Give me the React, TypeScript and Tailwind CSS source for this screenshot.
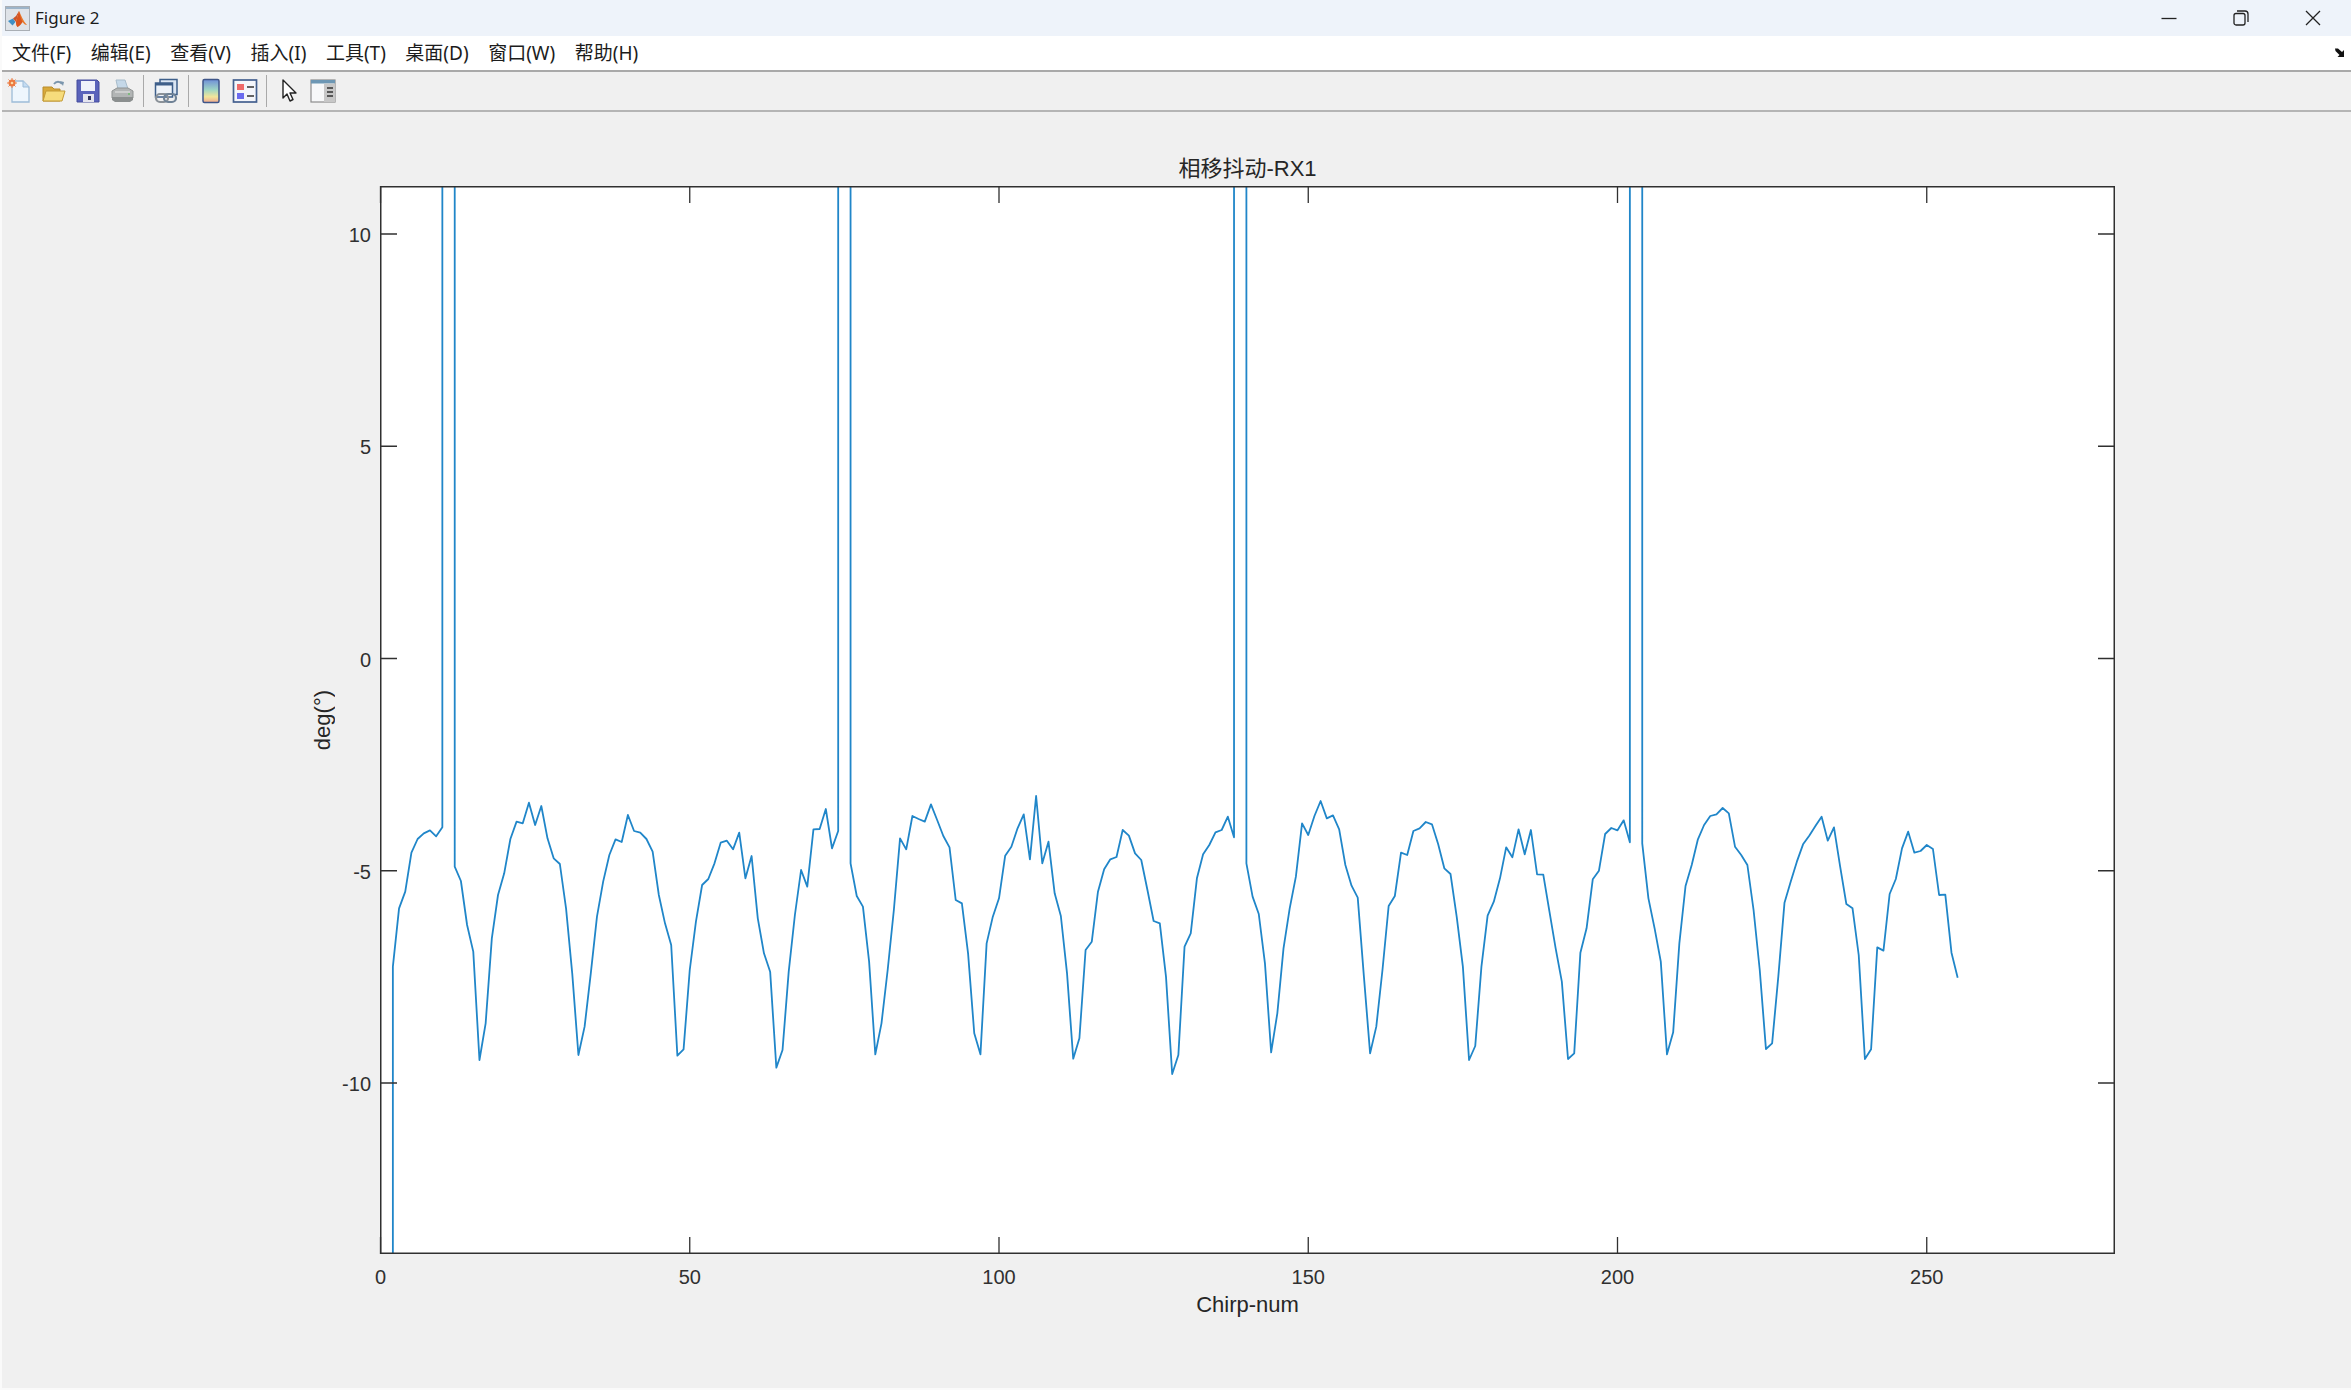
import type { ReactNode } from "react";

// heights read off the trace, one per chirp starting at chirp 2, null = clipped spike
const trace: (number | null)[] = [
  590, 415, 365, 248, 207, 190, 181, 199, 172, null, 290, 333, 465, 545, 870, 760, 505, 375, 310, 207,
  155, 160, 98, 165, 108, 205, 265, 282, 415, 610, 855, 770, 610, 440, 335, 255, 208, 216, 135, 183,
  188, 207, 245, 375, 460, 525, 857, 838, 600, 455, 345, 327, 280, 218, 212, 238, 188, 325, 258, 445,
  550, 605, 893, 840, 605, 435, 300, 350, 178, 177, 117, 235, 183, null, 280, 378, 410, 575, 853, 760,
  600, 420, 205, 238, 138, 147, 155, 103, 150, 198, 232, 390, 400, 550, 790, 853, 520, 440, 385, 257,
  230, 175, 133, 268, 78, 280, 215, 370, 438, 610, 866, 805, 540, 515, 365, 298, 268, 261, 180, 197,
  250, 270, 360, 453, 460, 620, 912, 855, 530, 490, 325, 253, 225, 187, 180, 140, 202, null, 280, 380,
  432, 580, 847, 730, 535, 415, 320, 160, 195, 138, 93, 145, 136, 178, 285, 347, 383, 620, 850, 770,
  600, 408, 378, 248, 255, 183, 175, 156, 163, 222, 295, 312, 440, 590, 870, 828, 590, 437, 395, 325,
  232, 262, 178, 253, 180, 313, 314, 425, 535, 635, 867, 850, 548, 475, 328, 302, 192, 174, 181, 151,
  217, null, 220, 385, 475, 575, 853, 787, 520, 348, 285, 208, 165, 138, 133, 114, 130, 230, 255, 285,
  420, 600, 837, 820, 620, 398, 335, 275, 223, 197, 168, 140, 212, 172, 290, 402, 415, 555, 867, 838,
  532, 542, 372, 327, 235, 185, 248, 243, 225, 237, 375, 374, 548, 623,
];

const PLOT_W = 1735;
const PLOT_H = 1068;
const xPx = (v: number) => 0.5 + v * 6.185;
const yPx = (deg: number) => 472.5 - deg * 42.45;

function tracePoints() {
  const pts: string[] = [`${xPx(2)},${PLOT_H + 20}`];
  trace.forEach((h, i) => {
    const n = i + 2;
    if (h === null) {
      pts.push(`${xPx(n - 1)},-20`, `${xPx(n + 1)},-20`);
    } else {
      pts.push(`${xPx(n)},${h / 3 + 584}`);
    }
  });
  return pts.join(" ");
}

const menus = ["文件(F)", "编辑(E)", "查看(V)", "插入(I)", "工具(T)", "桌面(D)", "窗口(W)", "帮助(H)"];
const xTicks = [0, 50, 100, 150, 200, 250];
const yTicks = [10, 5, 0, -5, -10];

function ToolIcon({ children }: { children: ReactNode }) {
  return (
    <div className="flex w-[34px] items-center justify-center">
      <svg viewBox="0 0 26 26" className="h-[26px] w-[26px]">
        {children}
      </svg>
    </div>
  );
}

function Separator({ className }: { className: string }) {
  return <div className={`h-[32px] w-px bg-[#a9a9a9] ${className}`} />;
}

function MatlabLogo() {
  return (
    <svg viewBox="0 0 25 25" className="h-[25px] w-[25px]">
      <rect x="0.5" y="0.5" width="24" height="24" fill="#dfe3e8" stroke="#a9aeb4" />
      <rect x="1" y="1" width="23" height="2" fill="#9db4c9" />
      <path d="M3 15l5-2.5 2.5 3.5-3 3.5z" fill="#3f8fc4" />
      <path d="M8 12.5l3-2.5 3-5-3 11z" fill="#c9542a" />
      <path d="M14 5c2 4 4 10 8 14-2 0-3-1-4.500-3-1.500 2-3 4-5 5-1-1-1.500-3-1.500-5z" fill="#e8792b" />
      <path d="M14 5c1 4 2 8 3.500 11-1.500 2-3 4-5 5-1-1-1.500-3-1.500-5z" fill="#d9541e" />
    </svg>
  );
}

export default function App() {
  return (
    <div className="flex h-[1390px] w-[2351px] flex-col overflow-hidden border-b-2 border-l-2 border-[#fafafa] bg-[#f0f0f0] font-['Noto_Sans','Noto_Sans_CJK_SC',sans-serif] text-[#1c1c1c]">
      {/* Title bar */}
      <div className="flex h-[36px] items-center bg-[#eef3fa] pl-[3px] pr-[2px] text-[17px]">
        <MatlabLogo />
        <span className="ml-[5px]">Figure 2</span>
        <div className="ml-auto flex">
          <div className="flex h-[36px] w-[72px] items-center justify-center">
            <svg viewBox="0 0 16 16" className="h-[16px] w-[16px]">
              <path d="M0.500 8.500h15" stroke="#222" strokeWidth="1.300" />
            </svg>
          </div>
          <div className="flex h-[36px] w-[72px] items-center justify-center">
            <svg viewBox="0 0 16 16" className="h-[16px] w-[16px]" fill="none" stroke="#222" strokeWidth="1.300">
              <rect x="1" y="3.500" width="11" height="11.500" rx="2" />
              <path d="M4 1h8c2 0 3 1 3 3v8" />
            </svg>
          </div>
          <div className="flex h-[36px] w-[72px] items-center justify-center">
            <svg viewBox="0 0 16 16" className="h-[16px] w-[16px]" stroke="#222" strokeWidth="1.300">
              <path d="M1 1l14 14M15 1L1 15" />
            </svg>
          </div>
        </div>
      </div>

      {/* Menu bar */}
      <div className="flex h-[36px] items-center gap-[19.5px] border-b-2 border-[#a9a9a9] bg-white pl-[10px] pr-[5px] text-[19px]">
        {menus.map((m) => (
          <span key={m}>{m}</span>
        ))}
        <svg viewBox="0 0 12 10" className="ml-auto h-[10px] w-[12px]">
          <path d="M0 1.500h3l4 3.500 2-2v7H2.500l2-2-4-4z" fill="#111" transform="translate(1 -1)" />
        </svg>
      </div>

      {/* Toolbar */}
      <div className="flex h-[40px] items-center border-b-2 border-[#b5b5b5] pl-[1px]">
        <ToolIcon>
          <path d="M5 3h11l6 6v15H5z" fill="#eef6fd" stroke="#9dbcd8" strokeWidth="1.300" />
          <path d="M16 3v6h6" fill="#c4dcf2" stroke="#9dbcd8" />
          <circle cx="5" cy="5" r="3.500" fill="#ef7f45" />
          <path d="M5 0v10M0 5h10M1.500 1.500l7 7M8.500 1.500l-7 7" stroke="#e9753a" strokeWidth="0.900" />
          <circle cx="5" cy="5" r="1.300" fill="#f8d9a5" />
        </ToolIcon>
        <ToolIcon>
          <path d="M2 9h9l2 2h6v12H2z" fill="#d8a93a" stroke="#b98c2a" />
          <path d="M2 23l3-10h19l-3 10z" fill="#f6dc7c" stroke="#c39a35" />
          <path d="M13 6c2-3 6-3 8 0" fill="none" stroke="#7b96ad" strokeWidth="1.800" />
          <path d="M19 3l4 1-1 4z" fill="#7b96ad" />
        </ToolIcon>
        <ToolIcon>
          <path d="M2 2h20l2 2v20H2z" fill="#5a63bb" stroke="#454c9c" />
          <rect x="6" y="3" width="14" height="10" fill="#eef1fb" />
          <rect x="8" y="16" width="11" height="8" fill="#e4e4ee" />
          <rect x="13" y="18" width="3" height="4" fill="#33365f" />
        </ToolIcon>
        <ToolIcon>
          <path d="M7 2h9l3 9H9z" fill="#c5d8e8" stroke="#a8bccb" />
          <path d="M3 13l5-3h11l5 3v7H3z" fill="#b2b5b5" stroke="#8f9393" />
          <path d="M3 19h21v3l-3 2H6l-3-2z" fill="#8b8f8f" />
          <path d="M6 14h15" stroke="#e8e8e8" />
          <circle cx="20" cy="16" r="1" fill="#6dbb6d" />
        </ToolIcon>
        <Separator className="ml-[4px] mr-[5px]" />
        <ToolIcon>
          <rect x="7" y="1.500" width="17" height="15" fill="#dbe6f3" stroke="#3e5f8a" strokeWidth="1.500" />
          <rect x="2.500" y="5" width="17" height="14" fill="#eef3f9" stroke="#3e5f8a" strokeWidth="1.500" />
          <rect x="2.500" y="5" width="17" height="2.500" fill="#3e5f8a" />
          <rect x="3" y="16" width="12" height="8" rx="4" fill="none" stroke="#8a9198" strokeWidth="2.200" />
          <rect x="11" y="16" width="12" height="8" rx="4" fill="none" stroke="#6f8296" strokeWidth="2.200" />
        </ToolIcon>
        <Separator className="ml-[5px] mr-[5px]" />
        <ToolIcon>
          <defs>
            <linearGradient id="cbar" x1="0" y1="0" x2="0" y2="1">
              <stop offset="0" stopColor="#6f8fd8" />
              <stop offset="0.45" stopColor="#9fd6c4" />
              <stop offset="0.75" stopColor="#f2e59a" />
              <stop offset="1" stopColor="#f0a890" />
            </linearGradient>
          </defs>
          <rect x="5" y="1.500" width="16" height="23" rx="1.500" fill="url(#cbar)" stroke="#3f5689" strokeWidth="1.500" />
        </ToolIcon>
        <ToolIcon>
          <rect x="1.500" y="2" width="23" height="22" fill="#f4f6fb" stroke="#44608f" strokeWidth="1.700" />
          <rect x="5" y="6" width="7" height="6" fill="#ef6b6b" />
          <rect x="5" y="15" width="7" height="6" fill="#6b6bef" />
          <path d="M15 9h7M15 18h7" stroke="#333" strokeWidth="1.600" />
        </ToolIcon>
        <Separator className="ml-[4px] mr-[5px]" />
        <ToolIcon>
          <path d="M7 2v18l4-4 3 7 3-1.500-3-6.500h6z" fill="#fff" stroke="#222" strokeWidth="1.400" strokeLinejoin="round" />
        </ToolIcon>
        <ToolIcon>
          <rect x="1" y="2" width="24" height="22" fill="#f7f8f9" stroke="#8d8d8d" strokeWidth="1.200" />
          <rect x="1" y="2" width="24" height="3.500" fill="#6d97b4" />
          <rect x="14" y="5.500" width="11" height="18.500" fill="#c7c7c7" />
          <path d="M17 10h6M17 14h6M17 18h6" stroke="#333" strokeWidth="1.500" />
        </ToolIcon>
      </div>

      {/* Figure */}
      <div className="ml-[307px] mt-[41px] flex items-start">
        <div className="mr-[43px] mt-[33px] flex h-[1068px] w-[28px] items-center justify-center">
          <span className="rotate-180 font-['Liberation_Sans',sans-serif] text-[22px] leading-none text-[#262626] [writing-mode:vertical-rl]">
            deg(°)
          </span>
        </div>
        <div className="flex w-[1735px] flex-col items-center font-['Liberation_Sans','Noto_Sans_CJK_SC',sans-serif] text-[#262626]">
          <div className="h-[33px] pt-px text-[22px] leading-[30px]">相移抖动-RX1</div>
          <svg
            viewBox={`0 0 ${PLOT_W} ${PLOT_H}`}
            className="h-[1068px] w-[1735px] overflow-visible bg-white"
          >
            <defs>
              <clipPath id="plot-area">
                <rect x="0" y="0" width={PLOT_W} height={PLOT_H} />
              </clipPath>
            </defs>
            <polyline
              points={tracePoints()}
              clipPath="url(#plot-area)"
              fill="none"
              stroke="#2086c9"
              strokeWidth="1.800"
              strokeLinejoin="round"
            />
            <rect x="0.750" y="0.750" width={PLOT_W - 1.5} height={PLOT_H - 1.5} fill="none" stroke="#303030" strokeWidth="1.500" />
            {xTicks.map((t) => (
              <g key={t}>
                <path
                  d={`M${xPx(t)} 0v17M${xPx(t)} ${PLOT_H}v-17`}
                  stroke="#303030"
                  strokeWidth="1.300"
                />
                <text x={xPx(t)} y={PLOT_H + 30} textAnchor="middle" fill="#303030" className="text-[20px]">
                  {t}
                </text>
              </g>
            ))}
            {yTicks.map((t) => (
              <g key={t}>
                <path
                  d={`M0 ${yPx(t)}h17M${PLOT_W} ${yPx(t)}h-17`}
                  stroke="#303030"
                  strokeWidth="1.300"
                />
                <text x={-9} y={yPx(t) + 8} textAnchor="end" fill="#303030" className="text-[20px]">
                  {t}
                </text>
              </g>
            ))}
          </svg>
          <div className="mt-[39px] text-[22px] leading-[24px]">Chirp-num</div>
        </div>
      </div>
    </div>
  );
}
